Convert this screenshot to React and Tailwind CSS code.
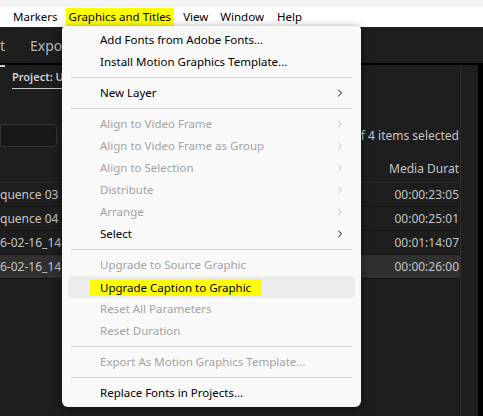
import { ChevronRight } from "lucide-react";

const font = { fontFamily: '"Noto Sans", "Open Sans", sans-serif' };

const menu = [
  { label: "Add Fonts from Adobe Fonts..." },
  { label: "Install Motion Graphics Template..." },
  { sep: true },
  { label: "New Layer", sub: true },
  { sep: true },
  { label: "Align to Video Frame", sub: true, off: true },
  { label: "Align to Video Frame as Group", sub: true, off: true },
  { label: "Align to Selection", sub: true, off: true },
  { label: "Distribute", sub: true, off: true },
  { label: "Arrange", sub: true, off: true },
  { label: "Select", sub: true },
  { sep: true },
  { label: "Upgrade to Source Graphic", off: true },
  { label: "Upgrade Caption to Graphic", hover: true },
  { label: "Reset All Parameters", off: true },
  { label: "Reset Duration", off: true },
  { sep: true },
  { label: "Export As Motion Graphics Template...", off: true },
  { sep: true },
  { label: "Replace Fonts in Projects..." },
];

const rows = [
  { name: "quence 03", dur: "00:00:23:05" },
  { name: "quence 04", dur: "00:00:25:01" },
  { name: "6-02-16_14", dur: "00:01:14:07" },
  { name: "6-02-16_14", dur: "00:00:26:00", active: true },
];

function MenuBar() {
  return (
    <div className="flex h-[20px] items-center bg-white text-[11.5px] text-black">
      <span className="ml-[13px]">Markers</span>
      <span className="ml-[8px] flex h-[18px] items-center bg-[#ffff00] px-[3px]">
        Graphics and Titles
      </span>
      <span className="ml-[9px]">View</span>
      <span className="ml-[12px]">Window</span>
      <span className="ml-[13px]">Help</span>
    </div>
  );
}

function Dropdown() {
  return (
    <div className="absolute left-[62px] top-[26px] w-[299px] rounded-b-[6px] rounded-t-[4px] bg-[#f9f9f9] pb-[3px] pt-[3px] text-[11.5px] shadow-[0_2px_8px_rgba(0,0,0,0.5)]">
      {menu.map((item, i) =>
        item.sep ? (
          <div key={i} className="mx-[9px] my-[4px] h-px bg-[#d4d4d4]" />
        ) : (
          <div
            key={i}
            className={`mx-[6px] flex h-[22px] items-center rounded-[4px] pl-[32px] pr-[9px] ${
              item.hover ? "bg-[#ececec]" : ""
            } ${item.off ? "text-[#a3a3a3]" : "text-black"}`}
          >
            <span
              className={
                item.hover ? "-ml-[10px] bg-[#ffff00] px-[10px] leading-[17px]" : ""
              }
            >
              {item.label}
            </span>
            {item.sub && (
              <ChevronRight
                size={12}
                strokeWidth={item.off ? 1.4 : 2}
                className={`ml-auto ${item.off ? "text-[#a8a8a8]" : "text-black"}`}
              />
            )}
          </div>
        )
      )}
    </div>
  );
}

export default function App() {
  return (
    <div
      className="relative h-[416px] w-[483px] overflow-hidden bg-[#1e1e1e]"
      style={font}
    >
      <div className="h-[7px] bg-[#f3f3f3]" />
      <MenuBar />

      {/* workspace tabs */}
      <div className="flex h-[36px] items-center gap-[25px] text-[14px] text-[#b8b8b8]">
        <div className="relative ml-0">
          t
          <div className="absolute -bottom-[11px] left-0 h-[2px] w-[5px] bg-[#c8c8c8]" />
        </div>
        <div>Export</div>
      </div>
      <div className="h-[2px] bg-black" />

      <div className="flex h-[351px]">
        <div className="flex w-[460px] flex-col">
          {/* panel header */}
          <div className="flex h-[24px] items-end pl-[12px]">
            <div className="border-b border-[#c8c8c8] pb-[3px] text-[11px] font-semibold text-[#d4d4d4]">
              Project: Untitled
            </div>
          </div>

          <div className="mt-[35px] flex items-center">
            <div className="h-[23px] w-[57px] rounded-r-[4px] border border-[#333] bg-[#181818]" />
            <div className="ml-auto pr-[1px] text-[12px] text-[#c4c4c4]">
              of 4 items selected
            </div>
          </div>

          <div className="mt-[13px] flex justify-end pr-[1px] text-[12px] text-[#c4c4c4]">
            Media Durat
          </div>

          <div className="mt-[4px] overflow-hidden rounded-tr-[4px] border-t border-[#2a2a2a]">
            {rows.map((r, i) => (
              <div
                key={i}
                className={`flex h-[24px] items-center justify-between border-b border-[#151515] text-[12px] text-[#c4c4c4] ${
                  r.active ? "bg-[#303030]" : "bg-[#1e1e1e]"
                }`}
              >
                <span>{r.name}</span>
                <span className="pr-[1px]">{r.dur}</span>
              </div>
            ))}
          </div>
        </div>
        <div className="w-px bg-[#2c2c2c]" />
        <div className="flex-1" />
        <div className="w-[5px] bg-black" />
      </div>

      <Dropdown />
    </div>
  );
}
